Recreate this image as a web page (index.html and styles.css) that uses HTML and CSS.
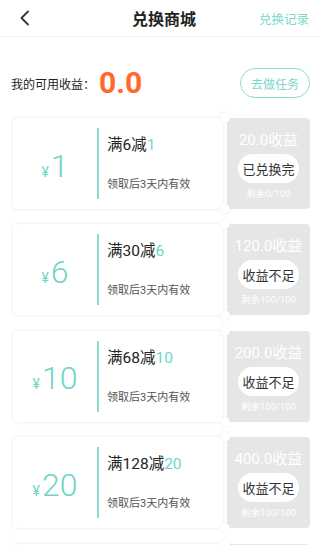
FILE: index.html
```html
<!DOCTYPE html>
<html lang="zh">
<head>
<meta charset="utf-8">
<link rel="stylesheet" href="styles.css">
</head>
<body>
<div class="header">
  <svg class="back" width="12" height="16" viewBox="0 0 12 16"><path d="M9 1.5 L2.5 8 L9 14.5" fill="none" stroke="#333" stroke-width="1.8" stroke-linecap="round" stroke-linejoin="round"/></svg>
  <div class="title">兑换商城</div>
  <div class="record">兑换记录</div>
</div>
<div class="income">
  <span class="label">我的可用收益：</span>
  <span class="value">0.0</span>
  <span class="task-btn">去做任务</span>
</div>
<div class="list">
  <div class="coupon">
    <div class="main">
      <div class="amount"><span class="yen">¥</span><span class="num">1</span></div>
      <div class="divider"></div>
      <div class="info">
        <div class="cond">满6减<span class="hl">1</span></div>
        <div class="valid">领取后3天内有效</div>
      </div>
    </div>
    <div class="side">
      <div class="cost">20.0收益</div>
      <div class="pill">已兑换完</div>
      <div class="left">剩余0/100</div>
    </div>
    <span class="notch top"></span><span class="notch bottom"></span>
  </div>
  <div class="coupon">
    <div class="main">
      <div class="amount"><span class="yen">¥</span><span class="num">6</span></div>
      <div class="divider"></div>
      <div class="info">
        <div class="cond">满30减<span class="hl">6</span></div>
        <div class="valid">领取后3天内有效</div>
      </div>
    </div>
    <div class="side">
      <div class="cost">120.0收益</div>
      <div class="pill">收益不足</div>
      <div class="left">剩余100/100</div>
    </div>
    <span class="notch top"></span><span class="notch bottom"></span>
  </div>
  <div class="coupon">
    <div class="main">
      <div class="amount"><span class="yen">¥</span><span class="num">10</span></div>
      <div class="divider"></div>
      <div class="info">
        <div class="cond">满68减<span class="hl">10</span></div>
        <div class="valid">领取后3天内有效</div>
      </div>
    </div>
    <div class="side">
      <div class="cost">200.0收益</div>
      <div class="pill">收益不足</div>
      <div class="left">剩余100/100</div>
    </div>
    <span class="notch top"></span><span class="notch bottom"></span>
  </div>
  <div class="coupon">
    <div class="main">
      <div class="amount"><span class="yen">¥</span><span class="num">20</span></div>
      <div class="divider"></div>
      <div class="info">
        <div class="cond">满128减<span class="hl">20</span></div>
        <div class="valid">领取后3天内有效</div>
      </div>
    </div>
    <div class="side">
      <div class="cost">400.0收益</div>
      <div class="pill">收益不足</div>
      <div class="left">剩余100/100</div>
    </div>
    <span class="notch top"></span><span class="notch bottom"></span>
  </div>
  <div class="coupon">
    <div class="main"></div>
    <div class="side"></div>
    <span class="notch top"></span>
  </div>
</div>
</body>
</html>
```
FILE: styles.css
```css
* { box-sizing: border-box; }
html, body { margin: 0; padding: 0; background: #fff; }
body {
  width: 320px; height: 545px; overflow: hidden;
  font-family: Roboto, "Noto Sans CJK SC", sans-serif;
  color: #333;
}
.header {
  height: 37px;
  border-bottom: 1px solid #f0f0f0;
  display: grid;
  grid-template-columns: 1fr auto 1fr;
  align-items: center;
  padding: 0 11px 0 19px;
}
.back { display: block; }
.title { font-size: 16px; font-weight: bold; color: #222; }
.record { justify-self: end; font-size: 12.5px; color: #7dd8cb; }
.income {
  display: flex; align-items: center;
  margin: 31px 10px 0 11px;
  height: 30px;
}
.income .label { font-size: 12px; color: #222; }
.income .value { font-size: 30px; font-weight: bold; color: #ff6a2a; margin-left: 4px; line-height: 30px; }
.task-btn {
  margin-left: auto;
  width: 70px; height: 30px;
  border: 1px solid #8adccf; border-radius: 15px;
  display: flex; align-items: center; justify-content: center;
  font-size: 12px; color: #7dd8cb;
}
.list { margin: 20px 10px 0 13px; }
.coupon {
  position: relative;
  display: flex; gap: 4px;
  height: 91px; margin-bottom: 15.4px;
}
.main {
  flex: 1;
  display: flex; align-items: center;
  background: #fff;
  border-radius: 4px;
  box-shadow: 0 0 3px rgba(0,0,0,0.12);
}
.amount {
  width: 84px;
  display: flex; align-items: baseline; justify-content: center;
  color: #6fd6c6;
  padding-top: 4px;
}
.yen { font-size: 14px; margin-right: 2px; }
.num { font-size: 32px; line-height: 36px; font-weight: 300; }
.divider { width: 2px; height: 71px; background: #86ddd0; }
.info {
  align-self: stretch;
  padding: 17px 0 0 8px;
  display: flex; flex-direction: column;
}
.cond { font-size: 15.5px; line-height: 20px; color: #222; }
.hl { color: #6fd6c6; }
.valid { font-size: 11px; line-height: 14px; color: #555; margin-top: 23px; }
.side {
  width: 83px;
  background: #e6e6e6;
  border-radius: 4px;
  display: flex; flex-direction: column; align-items: center;
  color: #fff;
}
.cost { font-size: 15px; line-height: 20px; margin-top: 12px; white-space: nowrap; }
.pill {
  margin-top: 4px;
  width: 61px; height: 29px; border-radius: 14.5px;
  background: #fff; color: #333; font-size: 13px;
  display: flex; align-items: center; justify-content: center;
}
.left { font-size: 9.5px; line-height: 14px; margin-top: 4px; }
.notch {
  position: absolute; left: calc(100% - 85px - 5px);
  width: 10px; height: 10px; border-radius: 50%;
  background: #fff;
  box-shadow: 0 0 2px rgba(0,0,0,0.1);
}
.notch.top { top: -5px; }
.notch.bottom { bottom: -5px; }
```
